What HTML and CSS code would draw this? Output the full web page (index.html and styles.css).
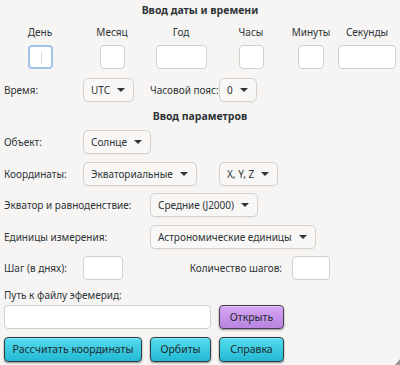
FILE: index.html
```html
<!DOCTYPE html>
<html lang="ru">
<head>
  <meta charset="UTF-8" />
  <title>Эфемериды</title>
  <link rel="stylesheet" href="styles.css">
</head>
<body>
  <div class="window">
    <h3 class="section-title first">Ввод даты и времени</h3>
    <div class="date-grid">
      <span class="date-label">День</span>
      <span class="date-label">Месяц</span>
      <span class="date-label">Год</span>
      <span class="date-label">Часы</span>
      <span class="date-label">Минуты</span>
      <span class="date-label">Секунды</span>

      <div class="field focused w25"><span class="caret"></span></div>
      <div class="field w25"></div>
      <div class="field w51"></div>
      <div class="field w25"></div>
      <div class="field w26"></div>
      <div class="field w58"></div>
    </div>

    <div class="form-grid">
      <span class="label">Время:</span>
      <div class="combo c2">UTC <span class="arrow"></span></div>
      <span class="label c3">Часовой пояс:</span>
      <div class="combo c4">0 <span class="arrow"></span></div>

      <h3 class="section-title full">Ввод параметров</h3>

      <span class="label">Объект:</span>
      <div class="combo c2">Солнце <span class="arrow"></span></div>

      <span class="label">Координаты:</span>
      <div class="combo c2 span2">Экваториальные <span class="arrow"></span></div>
      <div class="combo c4">X, Y, Z <span class="arrow"></span></div>

      <span class="label span2">Экватор и равноденствие:</span>
      <div class="combo c3 span3">Средние (J2000) <span class="arrow"></span></div>

      <span class="label span2">Единицы измерения:</span>
      <div class="combo c3 span3">Астрономические единицы <span class="arrow"></span></div>

      <span class="label">Шаг (в днях):</span>
      <div class="field c2 w40"></div>
      <span class="label c3 span2 right">Количество шагов:</span>
      <div class="field c5 w38"></div>

      <span class="label full path-label">Путь к файлу эфемерид:</span>
      <div class="field path"></div>
      <button class="btn purple c4">Открыть</button>

      <button class="btn cyan calc">Рассчитать координаты</button>
      <button class="btn cyan c3">Орбиты</button>
      <button class="btn cyan c4">Справка</button>
    </div>
    <div class="grip"></div>
  </div>
</body>
</html>
```

FILE: styles.css
```css
html, body {
  margin: 0;
  padding: 0;
}

body {
  font-family: 'Noto Sans', 'Open Sans', sans-serif;
  font-size: 10px;
  color: #2e3436;
  background-color: #f6f5f4;
}

.window {
  position: relative;
  width: 400px;
  height: 365px;
  box-sizing: border-box;
  padding: 0 4px 0 4px;
  overflow: hidden;
}

.section-title {
  margin: 0;
  font-size: 10.5px;
  font-weight: bold;
  line-height: 14px;
  text-align: center;
}

.section-title.first {
  padding-top: 3px;
}

/* date / time block */
.date-grid {
  display: grid;
  grid-template-columns: 72px 72px 66px 74px 46px 66px;
  grid-template-rows: 14px 24px;
  row-gap: 6px;
  justify-items: center;
  margin-top: 8px;
}

.date-label {
  line-height: 14px;
  white-space: nowrap;
}

.field {
  box-sizing: border-box;
  height: 24px;
  background-color: #fff;
  border: 1px solid #d3cfcb;
  border-radius: 4px;
}

.field.focused {
  position: relative;
  border: 2px solid #a4c4ee;
}

.caret {
  position: absolute;
  left: 11px;
  top: 5px;
  width: 1px;
  height: 12px;
  background-color: #d8d8d8;
}

.w25 { width: 25px; }
.w26 { width: 26px; }
.w38 { width: 38px; }
.w40 { width: 40px; }
.w51 { width: 51px; }
.w58 { width: 58px; }

/* main form */
.form-grid {
  display: grid;
  grid-template-columns: 71px 59px 61px 65px 1fr;
  grid-auto-rows: auto;
  column-gap: 8px;
  row-gap: 7.5px;
  margin-top: 9px;
}

.label {
  grid-column: 1;
  align-self: center;
  white-space: nowrap;
  line-height: 14px;
}

.full { grid-column: 1 / -1; }
.c2 { grid-column: 2; }
.c3 { grid-column: 3; }
.c4 { grid-column: 4; }
.c5 { grid-column: 5; }
.span2 { grid-column-end: span 2; }
.span3 { grid-column-end: span 3; }

.section-title.full {
  margin-top: 0;
  margin-bottom: 0;
  line-height: 13px;
}

.right {
  justify-self: end;
  margin-right: 2px;
}

.combo {
  justify-self: start;
  box-sizing: border-box;
  height: 24px;
  display: flex;
  align-items: center;
  gap: 7px;
  padding: 0 8px 0 7px;
  background-color: #f8f7f6;
  border: 1px solid #d6d1cd;
  border-radius: 5px;
  box-shadow: 0 1px 1px rgba(0, 0, 0, 0.04);
  white-space: nowrap;
}

.arrow {
  width: 0;
  height: 0;
  border-left: 4px solid transparent;
  border-right: 4px solid transparent;
  border-top: 4px solid #2e3436;
}

.path-label {
  margin-bottom: -4px;
}

.path {
  grid-column: 1 / span 3;
}

.btn {
  box-sizing: border-box;
  height: 24px;
  padding: 0;
  font-family: inherit;
  font-size: 10.5px;
  color: #1f2a2e;
  border: 1px solid #2f3b40;
  border-radius: 4px;
  box-shadow: 0 1px 2px rgba(0, 0, 0, 0.45), inset 0 1px 0 rgba(255, 255, 255, 0.3);
}

.cyan {
  height: 25px;
  background: linear-gradient(#55dcee, #22b9d4);
}

.purple {
  background: linear-gradient(#d6a6f4, #b784df);
  border-color: #4a3a55;
}

.calc {
  grid-column: 1 / span 2;
}

.grip {
  position: absolute;
  right: 0;
  bottom: 0;
  width: 0;
  height: 0;
  border-left: 5px solid transparent;
  border-bottom: 6px solid #9a9996;
}
```
